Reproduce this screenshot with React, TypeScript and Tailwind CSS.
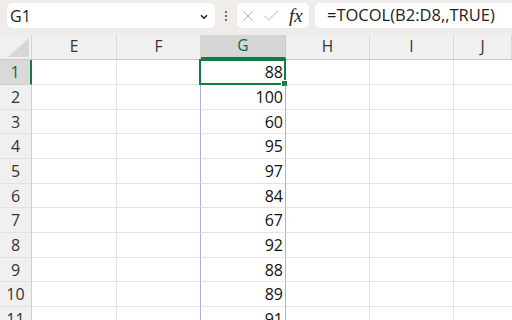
import React from "react";

const cols = [
  { name: "E", w: "w-[85px]" },
  { name: "F", w: "w-[84px]" },
  { name: "G", w: "w-[85px]" },
  { name: "H", w: "w-[84px]" },
  { name: "I", w: "w-[84px]" },
  { name: "J", w: "flex-1" },
];

const values = [88, 100, 60, 95, 97, 84, 67, 92, 88, 89, 91];
// row heights as measured: a 24px row every third line
const tall = [true, true, false, true, true, false, true, true, false, true, true];

const App = () => {
  return (
    <div className="w-[512px] h-[320px] overflow-hidden bg-white font-['Open_Sans',sans-serif] text-[#222]">
      {/* Formula bar */}
      <div className="h-[35px] bg-[#efecea] flex items-start pt-[3px] pl-[7px]">
        <div className="w-[208px] h-[25px] bg-white rounded-[5px] flex items-center justify-between pl-[3px] pr-[7px]">
          <span className="text-[16px] leading-none">G1</span>
          <svg width="8" height="6" viewBox="0 0 8 6" className="mt-[2px]">
            <path d="M1 1.2 L4 4.2 L7 1.2" fill="none" stroke="#222" strokeWidth="1.6" />
          </svg>
        </div>
        <div className="w-[22px] h-[25px] flex flex-col items-center justify-center gap-[2px]">
          <span className="w-[2px] h-[2px] bg-[#444] rounded-full" />
          <span className="w-[2px] h-[2px] bg-[#444] rounded-full" />
          <span className="w-[2px] h-[2px] bg-[#444] rounded-full" />
        </div>
        <div className="w-[72px] h-[25px] bg-white rounded-[5px] flex items-center pl-[5px] gap-[9px]">
          <svg width="12" height="12" viewBox="0 0 12 12">
            <path d="M1 1 L11 11 M11 1 L1 11" stroke="#b4b4b4" strokeWidth="1" fill="none" />
          </svg>
          <svg width="16" height="11" viewBox="0 0 16 11">
            <path d="M1 5.5 L5.5 10 L15 0.8" stroke="#b4b4b4" strokeWidth="1" fill="none" />
          </svg>
          <span className="font-['Liberation_Serif',serif] italic text-[19px] leading-none text-[#222] ml-[1px]">
            fx
          </span>
        </div>
        <div className="flex-1 h-[25px] bg-white rounded-l-[5px] ml-[6px] flex items-center pl-[12px]">
          <span className="text-[16.5px] leading-none whitespace-nowrap">=TOCOL(B2:D8,,TRUE)</span>
        </div>
      </div>

      {/* Column headers */}
      <div className="flex h-[25px] bg-[#f0f0f0] border-b border-[#c8c8c8]">
        <div className="w-[32px] border-r border-[#d4d4d4] relative">
          <svg width="21" height="19" viewBox="0 0 21 19" className="absolute right-[2px] bottom-[2px]">
            <path d="M21 0 L21 19 L0 19 Z" fill="#d7d7d7" />
          </svg>
        </div>
        {cols.map((c) =>
          c.name === "G" ? (
            <div
              key={c.name}
              className={`${c.w} bg-[#d6d6d6] border-r border-[#c8c8c8] border-b-2 border-b-[#107c41] flex items-center justify-center text-[15.5px] text-[#0f6b38]`}
            >
              {c.name}
            </div>
          ) : (
            <div
              key={c.name}
              className={`${c.w} border-r border-[#dadada] flex items-center justify-center text-[15.5px] text-[#333]`}
            >
              {c.name}
            </div>
          )
        )}
      </div>

      {/* Rows */}
      {values.map((v, i) => (
        <div key={i} className={`flex ${tall[i] ? "h-[25px]" : "h-[24px]"}`}>
          {i === 0 ? (
            <div className="w-[32px] bg-[#d9d9d9] border-r-2 border-[#107c41] border-b border-b-[#d0d0d0] flex items-center justify-center text-[16px] text-[#0f6b38]">
              {i + 1}
            </div>
          ) : (
            <div className="w-[32px] bg-[#f0f0f0] border-r border-[#d0d0d0] border-b border-b-[#e2e2e2] flex items-center justify-center text-[16px] text-[#333]">
              {i + 1}
            </div>
          )}
          <div className="w-[85px] border-r border-b border-[#e3e3e3]" />
          <div
            className={`w-[84px] border-b border-[#e3e3e3] border-r ${
              i === 0 ? "border-r-[#e3e3e3]" : "border-r-[#aab1d8]"
            }`}
          />
          <div
            className={`w-[85px] relative border-b border-[#e3e3e3] border-r ${
              i === 0 ? "border-r-[#e3e3e3]" : "border-r-[#aab1d8]"
            } flex items-center justify-end pr-[2px] text-[16px] text-[#111]`}
          >
            {v}
            {i === 0 && (
              <>
                <div className="absolute left-[-2px] top-[-1px] right-[-1px] bottom-[-1px] border-2 border-[#107c41]" />
                <div className="absolute right-[-3px] bottom-[-3px] w-[5px] h-[5px] bg-[#107c41] border border-white box-content" />
              </>
            )}
          </div>
          <div className="w-[84px] border-r border-b border-[#e3e3e3]" />
          <div className="w-[84px] border-r border-b border-[#e3e3e3]" />
          <div className="flex-1 border-b border-[#e3e3e3]" />
        </div>
      ))}
    </div>
  );
};

export default App;
